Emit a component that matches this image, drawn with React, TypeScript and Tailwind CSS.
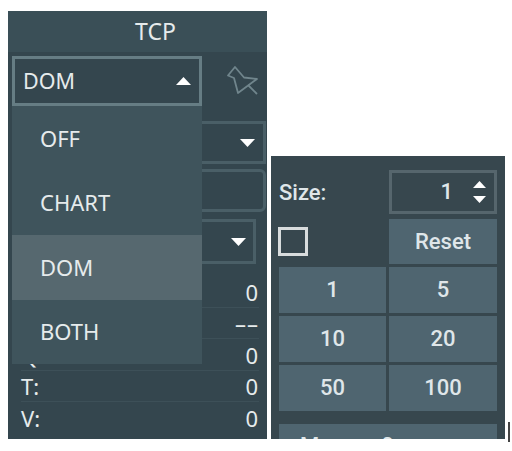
const stats = [
  { label: "", value: "0" },
  { label: "", value: "––" },
  { label: "Q:", value: "0" },
  { label: "T:", value: "0" },
  { label: "V:", value: "0" },
];

const menuItems = ["OFF", "CHART", "DOM", "BOTH"];
const sizes = ["1", "5", "10", "20", "50", "100"];

function Caret({ up = false }: { up?: boolean }) {
  return <svg width="15" height="8" viewBox="0 0 15 8" className="shrink-0 fill-white">
    <path d={up ? "M7.5 0L15 8H0Z" : "M0 0H15L7.5 8Z"} />
  </svg>;
}

function Pin() {
  return <svg width="32" height="32" viewBox="0 0 32 32" fill="none" className="stroke-[#70858c]" strokeWidth="1.8" strokeLinejoin="round">
    <path d="M9 2L2 10.5L8 13L12 28L31 14L18 12.5Z" />
    <path d="M22 20L31 29" />
  </svg>;
}

export default function App() {
  return <div className="flex h-[451px] w-[512px] items-start overflow-hidden bg-white pl-2 pt-[11px] font-['Noto_Sans','Open_Sans',sans-serif] text-[#e6ebec]">
    <section className="relative h-[428px] w-[259px] shrink-0 bg-[#34464e]">
      <h1 className="flex h-[41px] items-center justify-center bg-[#3a4f57] pl-9 text-[23px] leading-none">TCP</h1>
      <div className="flex h-[68px] items-start pl-1 pt-1">
        <div className="flex h-[50px] w-[190px] items-center justify-between border-[3px] border-[#667d84] bg-[#34464e] pl-2 pr-[8px] text-[21.5px]">DOM<Caret up /></div>
        <div className="ml-[24px] mt-[9px]"><Pin /></div>
      </div>
      <div className="ml-1 mt-[1px] flex h-[43px] w-[254px] items-center justify-end border-[3px] border-[#4a5f67] pr-2"><Caret /></div>
      <div className="ml-1 mt-[5px] h-[43px] w-[254px] rounded-md border-[3px] border-[#4a5f67]" />
      <div className="ml-1 mt-[7px] flex h-[45px] w-[244px] items-center justify-end border-[3px] border-[#4a5f67] pr-[7px]"><Caret /></div>
      <div className="ml-[13px] mr-[8px] mt-[12px] text-[22px] leading-none">
        {stats.map((row, i) => <div key={i} className="flex h-[31.5px] items-center justify-between border-b border-[#3d5058] pt-[1px] last:border-b-0">
          <span>{row.label}</span><span className="tracking-[1px]">{row.value}</span>
        </div>)}
      </div>
      <div className="absolute left-1 top-[95px] w-[190px] bg-[#3f545c] text-[22px]">
        {menuItems.map(item => <div key={item} className={`flex h-[64.5px] items-center pl-7 ${item === "DOM" ? "bg-[#56686f]" : ""}`}>{item}</div>)}
      </div>
    </section>
    <section className="ml-1 mt-[145px] h-[283px] w-[234px] shrink-0 overflow-hidden bg-[#37474e] px-2 pt-[14px] font-['Roboto',sans-serif] text-[22px] font-medium leading-none text-[#dfe6e9]">
      <div className="grid grid-cols-[107px_108px] gap-x-[3px]">
        <div className="flex h-[44px] items-center pt-[1px]">Size:</div>
        <div className="flex h-[44px] items-center justify-end border-[3px] border-[#56666d] pr-[8px]">
          <span className="mr-[20px]">1</span>
          <div className="flex flex-col gap-[8px]"><svg width="13" height="7" viewBox="0 0 13 7" className="fill-white"><path d="M6.5 0L13 7H0Z" /></svg><svg width="13" height="7" viewBox="0 0 13 7" className="fill-white"><path d="M0 0H13L6.5 7Z" /></svg></div>
        </div>
      </div>
      <div className="mt-[5px] grid grid-cols-[107px_108px] gap-[3px]">
        <div className="flex h-[45px] items-center"><div className="-ml-px h-[29px] w-[30px] border-[3px] border-[#d8dcdd]" /></div>
        <button className="h-[45px] bg-[#4f6570]">Reset</button>
        {sizes.map(size => <button key={size} className="h-[46px] bg-[#4f6570]">{size}</button>)}
      </div>
      <div className="mt-[13px] flex h-[40px] items-start gap-[62px] bg-[#4f6570] pl-[21px] pt-[11px]"><span>M</span><span>0</span></div>
    </section>
    <div className="ml-[3px] mt-[411px] h-5 w-[2px] shrink-0 bg-[#444]" />
  </div>;
}
